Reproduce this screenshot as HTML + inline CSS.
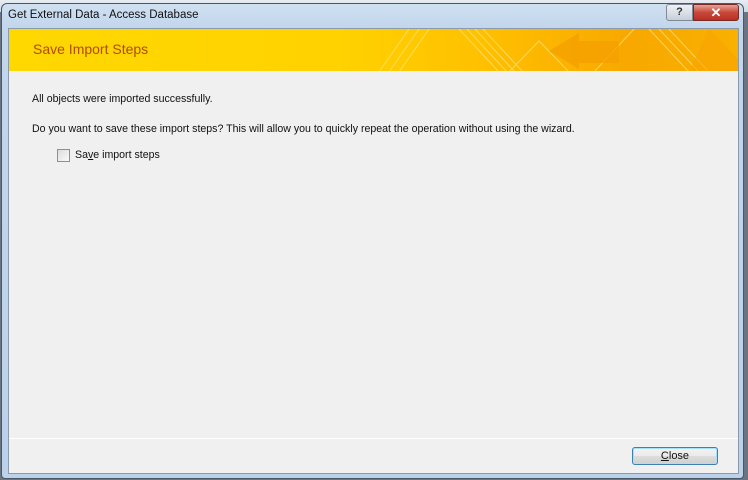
<!DOCTYPE html>
<html><head><style>
*{margin:0;padding:0;box-sizing:border-box}
body{width:748px;height:480px;overflow:hidden;background:#6b7480;font-family:"Liberation Sans",sans-serif;position:relative}
.bg{position:absolute;left:0;top:0;width:748px;height:12px;background:linear-gradient(#e8edf3,#cfd8e2)}
.win{position:absolute;left:1px;top:3px;width:743px;height:476px;border:1px solid #4a5866;border-radius:6px 6px 4px 4px;background:linear-gradient(180deg,#cfe0f1 0px,#c2d6ec 24px,#bcd2ea 100%);}
.title{position:absolute;left:8px;top:9px;font-size:11.5px;color:#111}
.help{position:absolute;left:666px;top:4px;width:27px;height:17px;border:1px solid #7f8a96;border-radius:3px 0 0 3px;background:linear-gradient(#eef2f6,#c6ced8);font-size:11px;color:#333;text-align:center;line-height:15px;font-weight:bold}
.close{position:absolute;left:693px;top:4px;width:46px;height:17px;border:1px solid #7a2a22;border-radius:0 3px 3px 0;background:linear-gradient(#e4a396,#c8473a 50%,#b83023);color:#fff;font-size:13px;text-align:center;line-height:15px;font-weight:bold}
.inner{position:absolute;left:8px;top:28px;width:731px;height:446px;border:1px solid #8a9aaa;background:#f0f0f0}
.banner{position:absolute;left:0;top:0;width:729px;height:42px;background:linear-gradient(90deg,#ffd800 0%,#ffd200 45%,#ffc000 65%,#f8a800 85%,#f9b000 100%);overflow:hidden}
.banner h1{position:absolute;left:24px;top:12px;font-size:14px;font-weight:normal;color:#b04a00}
.t{position:absolute;font-size:10.6px;color:#111}
.cb{position:absolute;left:48px;top:120px;width:13px;height:13px;border:1px solid #8e8f8f;background:linear-gradient(135deg,#dcdcdc,#fafafa)}
.sep{position:absolute;left:0;top:409px;width:729px;height:1px;background:#d0d0d0;border-bottom:1px solid #fff}
.btn{position:absolute;left:623px;top:418px;width:86px;height:18px;border:1px solid #3c7fb1;border-radius:3px;background:linear-gradient(#f2f2f2 0,#ebebeb 50%,#dddddd 51%,#cfcfcf);box-shadow:inset 0 0 0 1px #a8e0f8;font-size:11px;text-align:center;line-height:16px;color:#111}
</style></head><body>
<div class="bg"></div>
<div class="win"></div>
<div class="title">Get External Data - Access Database</div>
<div class="help">?</div>
<div class="close">✕</div>
<div class="inner">
 <div class="banner">
  <svg width="729" height="43" style="position:absolute;left:0;top:0">
   <g stroke="#ffe680" stroke-width="1" fill="none" opacity="0.7">
    <path d="M370 43 L400 0 M380 43 L410 0 M390 43 L420 0"/>
    <path d="M450 0 L490 43 M458 0 L498 43 M466 0 L506 43 M474 0 L514 43"/>
    <path d="M500 43 L530 12 L560 43"/>
    <path d="M585 43 L625 0 M640 0 L680 43 M650 0 L690 43 M660 0 L700 43"/>
   </g>
   <path d="M540 22 L570 4 L570 12 L610 12 L610 34 L570 34 L570 40 Z" fill="#f5a000" opacity="0.8"/>
   <path d="M700 0 L729 30 L729 43 L680 43 Z" fill="#f7a400" opacity="0.6"/>
  </svg>
  <h1>Save Import Steps</h1>
 </div>
 <div class="t" style="left:23px;top:64px">All objects were imported successfully.</div>
 <div class="t" style="left:23px;top:94px">Do you want to save these import steps? This will allow you to quickly repeat the operation without using the wizard.</div>
 <div class="cb"></div>
 <div class="t" style="left:66px;top:120px">Sa<u>v</u>e import steps</div>
 <div class="sep"></div>
 <div class="btn"><u>C</u>lose</div>
</div>
</body></html>
